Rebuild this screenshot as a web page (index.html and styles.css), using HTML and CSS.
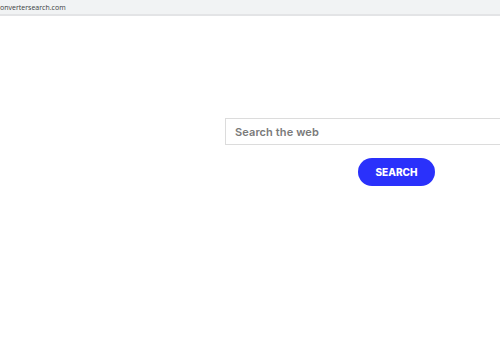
FILE: index.html
```html
<!DOCTYPE html>
<html lang="en">
<head>
<meta charset="utf-8">
<title>convertersearch.com</title>
<link rel="stylesheet" href="styles.css">
</head>
<body>
  <div class="topbar"><span class="url">onvertersearch.com</span></div>
  <main class="page">
    <form class="search">
      <input class="search-input" type="text" placeholder="Search the web">
      <button class="search-btn" type="button">SEARCH</button>
    </form>
  </main>
</body>
</html>
```
FILE: styles.css
```css
html, body {
  margin: 0;
  padding: 0;
  background: #ffffff;
  overflow: hidden;
  width: 500px;
  height: 350px;
}
.topbar {
  height: 14px;
  background: #f1f3f4;
  border-bottom: 2px solid #e3e4e6;
  display: flex;
  align-items: center;
  overflow: hidden;
}
.url {
  font-family: "Open Sans", "Liberation Sans", sans-serif;
  font-size: 7px;
  color: #3a3d40;
  white-space: nowrap;
}
.page {
  padding-top: 102px;
  padding-left: 225px;
}
.search {
  display: flex;
  flex-direction: column;
  margin: 0;
}
.search-input {
  box-sizing: border-box;
  width: 300px;
  height: 27px;
  border: 1px solid #dcdcdc;
  border-radius: 0;
  padding: 0 0 0 9px;
  font-family: "Inter", sans-serif;
  font-weight: 600;
  font-size: 11px;
  letter-spacing: 0.1px;
  color: #6f6f6f;
  outline: none;
  background: #fff;
}
.search-input::placeholder {
  color: #7a7a7a;
}
.search-btn {
  margin-top: 13px;
  margin-left: 133px;
  width: 77px;
  height: 28px;
  border: none;
  border-radius: 14px;
  background: #2a31fb;
  color: #ffffff;
  font-family: "Inter", sans-serif;
  font-weight: 800;
  font-size: 10px;
  letter-spacing: 0;
  padding: 0;
  cursor: pointer;
}
```
